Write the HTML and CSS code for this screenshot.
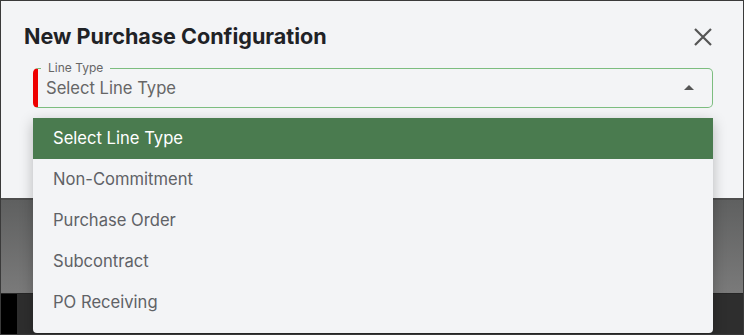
FILE: index.html
```html
<!DOCTYPE html>
<html lang="en">
<head>
    <meta charset="UTF-8">
    <title>New Purchase Configuration</title>
    <link rel="stylesheet" href="styles.css">
</head>
<body>
    <div class="screen">
        <div class="dialog">
            <div class="dialog-header">
                <h1>New Purchase Configuration</h1>
                <button class="close-btn" aria-label="Close">
                    <svg width="18" height="18" viewBox="0 0 18 18">
                        <path d="M1 1 L17 17 M17 1 L1 17" stroke="#555" stroke-width="2.2" fill="none"/>
                    </svg>
                </button>
            </div>

            <fieldset class="select-field">
                <legend>Line Type</legend>
                <div class="select-row">
                    <span class="placeholder">Select Line Type</span>
                    <span class="caret"></span>
                </div>
            </fieldset>
        </div>

        <div class="backdrop">
            <div class="backdrop-grey"></div>
            <div class="backdrop-dark">
                <div class="dark-block"></div>
            </div>
        </div>

        <ul class="menu">
            <li class="menu-item active">Select Line Type</li>
            <li class="menu-item">Non-Commitment</li>
            <li class="menu-item">Purchase Order</li>
            <li class="menu-item">Subcontract</li>
            <li class="menu-item">PO Receiving</li>
        </ul>
    </div>
</body>
</html>
```

FILE: styles.css
```css
body {
    margin: 0;
    font-family: Inter, 'Noto Sans', sans-serif;
    background: #2e2e2e;
}

.screen {
    position: relative;
    width: 744px;
    height: 335px;
    box-sizing: border-box;
    border: 1px solid #3a3a3a;
    overflow: hidden;
    background: #2e2e2e;
    display: flex;
    flex-direction: column;
}

.dialog {
    background: #f3f4f6;
    height: 197px;
    flex-shrink: 0;
    padding: 20px 30px 0 23px;
    box-sizing: border-box;
}

.dialog-header {
    display: flex;
    justify-content: space-between;
    align-items: center;
}

h1 {
    margin: 0;
    font-size: 21.6px;
    line-height: 30px;
    font-weight: 700;
    color: #1f2226;
}

.close-btn {
    background: none;
    border: none;
    padding: 0;
    width: 18px;
    height: 18px;
    margin-top: 2px;
    margin-right: 1px;
    cursor: pointer;
}

.select-field {
    margin: 10px 0 0 9px;
    padding: 0 8px;
    border: 1px solid #7cbd7f;
    border-left: 5px solid #ee0000;
    border-radius: 5px;
    min-width: 0;
}

.select-field legend {
    font-size: 12px;
    line-height: 14px;
    color: #666;
    padding: 0 7px;
    margin-left: -5px;
}

.select-row {
    display: flex;
    justify-content: space-between;
    align-items: center;
    height: 26px;
    padding-bottom: 6px;
}

.placeholder {
    font-size: 16.6px;
    color: #666;
}

.caret {
    width: 0;
    height: 0;
    border-left: 5px solid transparent;
    border-right: 5px solid transparent;
    border-bottom: 5px solid #555;
    margin-right: 10px;
    margin-top: -2px;
}

.backdrop {
    flex: 1;
    display: flex;
    flex-direction: column;
}

.backdrop-grey {
    height: 93px;
    border-top: 2px solid #4e4e4e;
    background: linear-gradient(#5f6060, #7a7a7a);
}

.backdrop-dark {
    flex: 1;
    background: #2e2e2e;
    border-top: 1px solid #262626;
}

.dark-block {
    width: 16px;
    height: 100%;
    background: #000;
}

.menu {
    position: absolute;
    top: 117px;
    left: 32px;
    width: 680px;
    margin: 0;
    padding: 0 0 10px;
    list-style: none;
    background: #f3f4f6;
    border-radius: 0 0 4px 4px;
    box-shadow: 0 4px 14px rgba(0, 0, 0, 0.25);
}

.menu-item {
    height: 41px;
    line-height: 41px;
    padding-left: 20px;
    font-size: 16.6px;
    color: #5f6266;
}

.menu-item.active {
    background: #4a7b4f;
    color: #fff;
}
```
